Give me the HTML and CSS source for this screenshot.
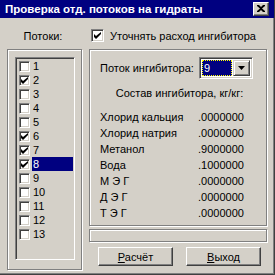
FILE: index.html
```html
<!DOCTYPE html>
<html lang="ru">
<head>
<meta charset="utf-8">
<title>Проверка отд. потоков на гидраты</title>
<link rel="stylesheet" href="styles.css">
</head>
<body>
<div class="window">
  <div class="titlebar">
    <span class="title">Проверка отд. потоков на гидраты</span>
    <span class="close">
      <svg width="8" height="7" viewBox="0 0 8 7"><path d="M0 0h2l2 2 2-2h2v1L5 3.5 8 6v1H6L4 5 2 7H0V6l3-2.5L0 1z" fill="#000"/></svg>
    </span>
  </div>
  <div class="content">
    <div class="top-left">Потоки:</div>
    <div class="top-right">
      <span class="cb cb-lg checked"><svg width="7" height="7" viewBox="0 0 7 7"><path d="M0 2v3l2 2 5-5V0L2 4z" fill="#000"/></svg></span>
      <span class="cb-text">Уточнять расход ингибитора</span>
    </div>

    <div class="group left-group">
      <div class="listbox">
        <div class="item"><span class="cb"></span><span class="lbl">1</span></div>
        <div class="item"><span class="cb"><svg width="7" height="7" viewBox="0 0 7 7"><path d="M0 2v3l2 2 5-5V0L2 4z" fill="#000"/></svg></span><span class="lbl">2</span></div>
        <div class="item"><span class="cb"></span><span class="lbl">3</span></div>
        <div class="item"><span class="cb"></span><span class="lbl">4</span></div>
        <div class="item"><span class="cb"></span><span class="lbl">5</span></div>
        <div class="item"><span class="cb"><svg width="7" height="7" viewBox="0 0 7 7"><path d="M0 2v3l2 2 5-5V0L2 4z" fill="#000"/></svg></span><span class="lbl">6</span></div>
        <div class="item"><span class="cb"><svg width="7" height="7" viewBox="0 0 7 7"><path d="M0 2v3l2 2 5-5V0L2 4z" fill="#000"/></svg></span><span class="lbl">7</span></div>
        <div class="item"><span class="cb"><svg width="7" height="7" viewBox="0 0 7 7"><path d="M0 2v3l2 2 5-5V0L2 4z" fill="#000"/></svg></span><span class="lbl selected">8</span></div>
        <div class="item"><span class="cb"></span><span class="lbl">9</span></div>
        <div class="item"><span class="cb"></span><span class="lbl">10</span></div>
        <div class="item"><span class="cb"></span><span class="lbl">11</span></div>
        <div class="item"><span class="cb"></span><span class="lbl">12</span></div>
        <div class="item"><span class="cb"></span><span class="lbl">13</span></div>
      </div>
    </div>

    <div class="right-col">
      <div class="group panel">
        <div class="combo-row">
          <span class="combo-label">Поток ингибитора:</span>
          <span class="combo">
            <span class="combo-value">9</span>
            <span class="combo-btn"><svg width="7" height="4" viewBox="0 0 7 4"><path d="M0 0h7L3.5 4z" fill="#000"/></svg></span>
          </span>
        </div>
        <div class="heading">Состав ингибитора, кг/кг:</div>
        <div class="rows">
          <div class="row"><span class="name">Хлорид кальция</span><span class="val">.0000000</span></div>
          <div class="row"><span class="name">Хлорид натрия</span><span class="val">.0000000</span></div>
          <div class="row"><span class="name">Метанол</span><span class="val">.9000000</span></div>
          <div class="row"><span class="name">Вода</span><span class="val">.1000000</span></div>
          <div class="row"><span class="name">М Э Г</span><span class="val">.0000000</span></div>
          <div class="row"><span class="name">Д Э Г</span><span class="val">.0000000</span></div>
          <div class="row"><span class="name">Т Э Г</span><span class="val">.0000000</span></div>
        </div>
      </div>
      <div class="group status"></div>
      <div class="buttons">
        <button class="btn"><u>Р</u>асчёт</button>
        <button class="btn"><u>В</u>ыход</button>
      </div>
    </div>
  </div>
</div>
</body>
</html>
```

FILE: styles.css
```css
html, body {
  margin: 0;
  padding: 0;
  background: #d4d0c8;
}

.window {
  width: 275px;
  height: 275px;
  box-sizing: border-box;
  background: #d4d0c8;
  border-right: 1px solid #404040;
  border-bottom: 1px solid #404040;
  box-shadow: inset -1px -1px 0 #808080;
  font-family: "Liberation Sans", Arial, sans-serif;
  font-size: 11px;
  color: #000;
  overflow: hidden;
}

.titlebar {
  height: 18px;
  background: #000080;
  display: flex;
  align-items: center;
  justify-content: space-between;
  padding: 0 5px 0 5px;
}

.title {
  color: #fff;
  font-weight: bold;
  font-size: 11.5px;
  white-space: nowrap;
}

.close {
  width: 16px;
  height: 14px;
  box-sizing: border-box;
  background: #d4d0c8;
  border-top: 1px solid #fff;
  border-left: 1px solid #fff;
  border-right: 1px solid #404040;
  border-bottom: 1px solid #404040;
  box-shadow: inset -1px -1px 0 #808080;
  display: flex;
  align-items: center;
  justify-content: center;
  padding: 0 1px 1px 0;
}

.close svg {
  display: block;
}

.content {
  display: grid;
  grid-template-columns: 75px 179px;
  grid-template-rows: 31px 222px;
  column-gap: 7px;
  padding-left: 7px;
}

.top-left {
  display: flex;
  align-items: center;
  justify-content: center;
  padding-top: 4px;
  padding-right: 3px;
}

.top-right {
  display: flex;
  align-items: center;
  padding-left: 2px;
  padding-top: 4px;
}

.cb {
  width: 11px;
  height: 11px;
  box-sizing: border-box;
  background: #fff;
  border-top: 1px solid #808080;
  border-left: 1px solid #808080;
  border-right: 1px solid #fff;
  border-bottom: 1px solid #fff;
  box-shadow: inset 1px 1px 0 #404040, inset -1px -1px 0 #d4d0c8;
  display: flex;
  align-items: center;
  justify-content: center;
  flex: none;
}

.cb svg {
  display: block;
}

.cb-lg {
  width: 13px;
  height: 13px;
}

.cb-text {
  margin-left: 6px;
  white-space: nowrap;
}

.group {
  box-sizing: border-box;
  border: 1px solid #808080;
  box-shadow: inset 1px 1px 0 #fff, 1px 1px 0 #fff;
}

.left-group {
  width: 75px;
  height: 221px;
  padding: 7px 0 0 7px;
}

.listbox {
  width: 60px;
  height: 203px;
  box-sizing: border-box;
  border-top: 1px solid #808080;
  border-left: 1px solid #808080;
  border-right: 1px solid #fff;
  border-bottom: 1px solid #fff;
  box-shadow: inset 1px 1px 0 #404040, inset -1px -1px 0 #d4d0c8;
  padding: 1px 1px 0 1px;
  display: flex;
  flex-direction: column;
}

.item {
  height: 14px;
  display: flex;
  align-items: center;
  padding-left: 2px;
}

.item .cb {
  margin-right: 2px;
}

.lbl {
  flex: 1;
  height: 14px;
  line-height: 14px;
  padding-left: 1px;
}

.lbl.selected {
  background: #000080;
  color: #fff;
}

.right-col {
  display: flex;
  flex-direction: column;
}

.panel {
  width: 178px;
  height: 177px;
  padding: 7px 0 0 10px;
}

.combo-row {
  height: 22px;
  display: flex;
  align-items: center;
}

.combo-label {
  width: 99px;
  white-space: nowrap;
}

.combo {
  width: 54px;
  height: 22px;
  box-sizing: border-box;
  border-top: 1px solid #808080;
  border-left: 1px solid #808080;
  border-right: 1px solid #fff;
  border-bottom: 1px solid #fff;
  box-shadow: inset 1px 1px 0 #404040, inset -1px -1px 0 #d4d0c8;
  background: #fff;
  padding: 2px;
  display: flex;
}

.combo-value {
  flex: 1;
  background: #000080;
  color: #fff;
  outline: 1px dotted #ffff00;
  outline-offset: -1px;
  padding-left: 2px;
  line-height: 16px;
  margin: 0 1px 0 0;
}

.combo-btn {
  width: 17px;
  box-sizing: border-box;
  background: #d4d0c8;
  border-top: 1px solid #d4d0c8;
  border-left: 1px solid #d4d0c8;
  border-right: 1px solid #404040;
  border-bottom: 1px solid #404040;
  box-shadow: inset 1px 1px 0 #fff, inset -1px -1px 0 #808080;
  display: flex;
  align-items: center;
  justify-content: center;
}

.combo-btn svg {
  display: block;
}

.heading {
  margin-top: 6px;
  line-height: 16px;
  text-align: center;
  padding-right: 7px;
}

.rows {
  margin-top: 8px;
}

.row {
  display: flex;
  height: 16px;
  line-height: 16px;
}

.name {
  width: 98px;
  white-space: nowrap;
}

.status {
  width: 178px;
  height: 13px;
  margin-top: 3px;
}

.buttons {
  display: flex;
  gap: 13px;
  padding-left: 9px;
  margin-top: 5px;
}

.btn {
  width: 75px;
  height: 19px;
  box-sizing: border-box;
  background: #d4d0c8;
  font-family: "Liberation Sans", Arial, sans-serif;
  font-size: 11px;
  color: #000;
  padding: 0;
  border-top: 1px solid #fff;
  border-left: 1px solid #fff;
  border-right: 1px solid #404040;
  border-bottom: 1px solid #404040;
  box-shadow: inset -1px -1px 0 #808080;
  border-radius: 0;
}
```
